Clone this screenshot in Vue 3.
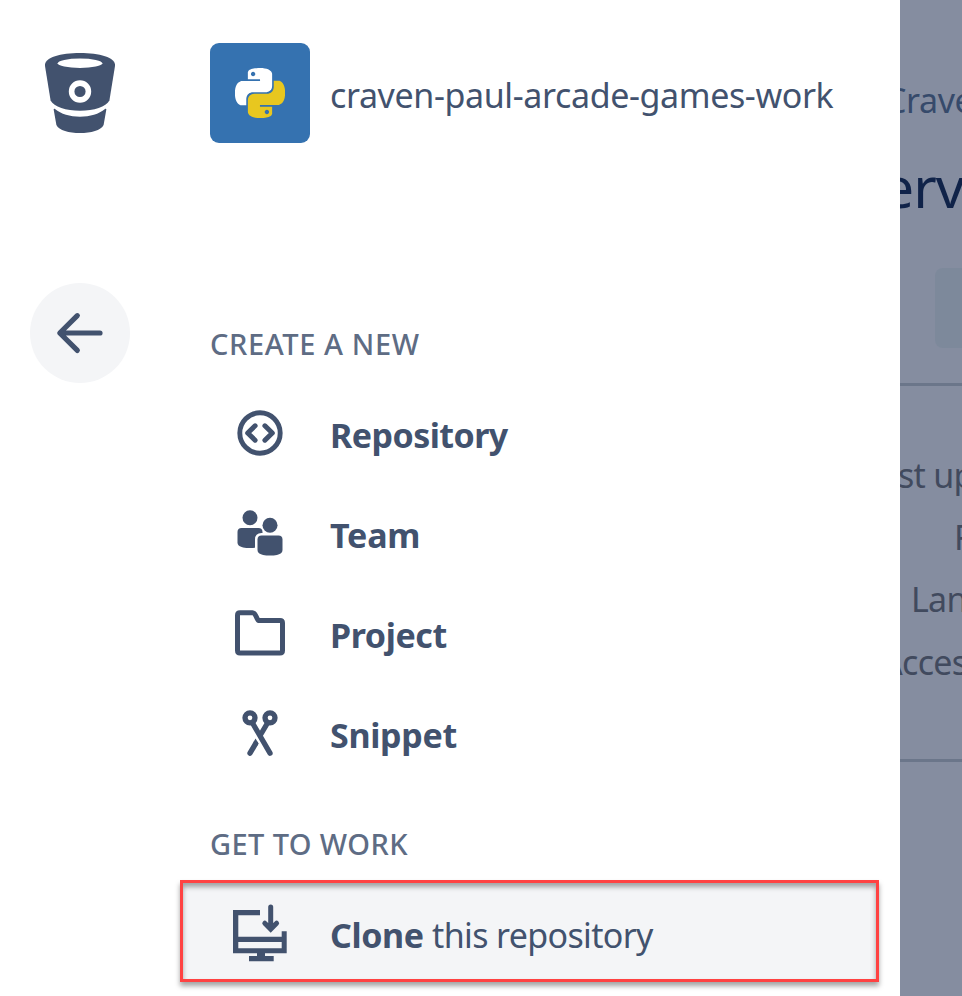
<script setup>
const createItems = [
  { id: 'repository', label: 'Repository' },
  { id: 'team', label: 'Team' },
  { id: 'project', label: 'Project' },
  { id: 'snippet', label: 'Snippet' },
]
const details = ['st up', 'F', 'Lan', 'Acces']
const snake =
  'M14.25.18l.9.2.73.26.59.3.45.32.34.34.25.34.16.33.1.3.04.26.02.2-.01.13V8.5l-.05.63-.13.55-.21.46-.26.38-.3.31-.33.25-.35.19-.35.14-.33.1-.3.07-.26.04-.21.02H8.77l-.69.05-.59.14-.5.22-.41.27-.33.32-.27.35-.2.36-.15.37-.1.35-.07.32-.04.27-.02.21v3.06H3.17l-.21-.03-.28-.07-.32-.12-.35-.18-.36-.26-.36-.36-.35-.46-.32-.59-.28-.73-.21-.88-.14-1.05-.05-1.23.06-1.22.16-1.04.24-.87.32-.71.36-.57.4-.44.42-.33.42-.24.4-.16.36-.1.32-.05.24-.01h.16l.06.01h8.16v-.83H6.18l-.01-2.75-.02-.37.05-.34.11-.31.17-.28.25-.26.31-.23.38-.2.44-.18.51-.15.58-.12.64-.1.71-.06.77-.04.84-.02 1.27.05zm-6.3 1.98l-.23.33-.08.41.08.41.23.34.33.22.41.09.41-.09.33-.22.23-.34.08-.41-.08-.41-.23-.33-.33-.22-.41-.09-.41.09z'
</script>

<template>
  <div class="page">
    <aside class="drawer">
      <nav class="rail">
        <svg class="bucket" viewBox="0 0 72 82">
          <path fill="currentColor" d="M1 14C0 5 17 1 36 1s36 4 35 13l-5.600 34.500C62 55 50 58.700 36 58.700S10 55 6.600 48.500z" />
          <ellipse cx="36" cy="11.300" rx="22.300" ry="4.700" fill="#fff" />
          <circle cx="36" cy="39.500" r="8.400" fill="none" stroke="#fff" stroke-width="5.600" />
          <path fill="currentColor" d="M11 57C17 62 26 64.700 36 64.700S55 62 61 57c1-.6 1.500-.2 1.300.8L59.600 73C57 78.500 47 81 36 81S15 78.500 12.400 73L9.700 57.800c-.2-1 .3-1.400 1.300-.8z" />
        </svg>
        <button class="back" aria-label="Back">
          <svg viewBox="0 0 100 100">
            <path d="M47.300 32.700 29.800 50l17.500 17.400M30 50h40" fill="none" stroke="currentColor" stroke-width="5.200" stroke-linecap="round" stroke-linejoin="round" />
          </svg>
        </button>
      </nav>

      <main class="content">
        <header class="repo">
          <div class="avatar">
            <svg viewBox="0 0 24 24">
              <path :d="snake" fill="#fff" />
              <path :d="snake" fill="#e8c71f" transform="rotate(180 12 12)" />
            </svg>
          </div>
          <span class="name">craven-paul-arcade-games-work</span>
        </header>

        <h2 class="heading create">CREATE A NEW</h2>
        <a v-for="item in createItems" :key="item.id" class="item">
          <svg class="icon" viewBox="0 0 60 60">
            <g v-if="item.id === 'repository'" fill="none" stroke="currentColor" stroke-linecap="round" stroke-linejoin="round">
              <circle cx="30" cy="30" r="20.200" stroke-width="4.900" />
              <path d="M25.100 22.800 17.700 30l7.400 7.200M34.900 22.800l7.400 7.200-7.400 7.200" stroke-width="5" />
            </g>
            <g v-else-if="item.id === 'team'" fill="currentColor">
              <circle cx="20" cy="14.800" r="7.500" />
              <path d="M11.500 25h17c2.500 0 4 1.500 4 4v12.500C30 44 25 45 20 45s-9.500-.8-11.500-2.800c-.7-.8-1-1.700-1-2.700V29c0-2.500 1.500-4 4-4z" />
              <path d="M31.500 32.500h17c2.500 0 4 1.500 4 4V47c0 1-.3 1.900-1 2.700-2 2-6.500 2.800-11.500 2.800s-9.500-.8-11.500-2.800c-.7-.8-1-1.700-1-2.700V36.500c0-2.500 1.500-4 4-4z" stroke="#fff" stroke-width="5" paint-order="stroke" />
              <circle cx="40" cy="22.300" r="7.500" />
            </g>
            <path v-else-if="item.id === 'project'" d="M10 9.800h12.500c3.500 0 4.500 7.700 6 7.700H50c1.700 0 2.500.8 2.500 2.500v27.500c0 1.700-.8 2.500-2.500 2.500H10c-1.700 0-2.500-.8-2.500-2.500V12.300c0-1.700.8-2.500 2.500-2.500z" fill="none" stroke="currentColor" stroke-width="5" />
            <g v-else fill="none" stroke="currentColor" stroke-width="5.300" stroke-linecap="round">
              <circle cx="20" cy="14.800" r="5" />
              <circle cx="40" cy="14.800" r="5" />
              <path d="M22.500 20 40 50.200M37.500 20 31 31" />
              <path d="M20 50.200 25.600 40.700" />
              <path d="M23.300 39.200 25.600 35.500 28.500 40.400 27 43z" fill="currentColor" stroke="none" />
            </g>
          </svg>
          <b class="label" :class="item.id">{{ item.label }}</b>
        </a>

        <h2 class="heading work">GET TO WORK</h2>
        <a class="item selected">
          <svg class="icon" viewBox="0 0 60 60">
            <path fill="currentColor" d="M3 7h27v5.300H8.300v21.400h43.400v-5.400h5v22H35V53h8.700v5.300H19V53h8v-2.700H3zM8.300 39v6.300h43.400V39z" fill-rule="evenodd" />
            <path d="M40.700 4v21M34.800 20.200l5.900 5.900 5.900-5.900" fill="none" stroke="currentColor" stroke-width="5" stroke-linecap="round" />
          </svg>
          <span class="label clone"><b>Clone</b> <span class="rest">this repository</span></span>
        </a>
      </main>
    </aside>

    <section class="behind">
      <div class="crumb">Crave</div>
      <div class="title">erv</div>
      <div class="button"></div>
      <div class="details">
        <div v-for="(d, i) in details" :key="d" class="detail" :class="'d' + i">{{ d }}</div>
      </div>
    </section>
  </div>
</template>

<style>
body {
  overflow: hidden;
}
</style>

<style scoped>
.page {
  display: flex;
  width: 962px;
  height: 996px;
  overflow: hidden;
  font-family: "Noto Sans", "Open Sans", sans-serif;
  font-size: 34px;
  color: #42526e;
  background: #fff;
}
.drawer {
  display: flex;
  flex: 0 0 900px;
}
.rail {
  display: flex;
  flex: 0 0 160px;
  flex-direction: column;
  align-items: center;
  padding-top: 52px;
  box-sizing: border-box;
}
.bucket {
  width: 72px;
  height: 82px;
}
.back {
  width: 100px;
  height: 100px;
  margin-top: 149px;
  padding: 0;
  border: 0;
  border-radius: 50%;
  color: inherit;
  background: #f4f5f7;
}
.back svg {
  display: block;
}
.content {
  flex: 1;
  padding: 43px 21px 0 20px;
}
.repo {
  display: flex;
  align-items: center;
  gap: 20px;
  height: 100px;
  padding-left: 30px;
}
.avatar {
  display: flex;
  align-items: center;
  justify-content: center;
  width: 100px;
  height: 100px;
  border-radius: 9px;
  background: #3572b0;
}
.avatar svg {
  width: 50px;
  height: 50px;
}
.name {
  padding-top: 4px;
  letter-spacing: -0.380px;
  white-space: nowrap;
}
.heading {
  margin: 0;
  padding-left: 30px;
  font-size: 29px;
  line-height: 40px;
  font-weight: 500;
  letter-spacing: 0.600px;
  color: #5e6c84;
  white-space: nowrap;
}
.create {
  margin-top: 181px;
  margin-bottom: 19px;
}
.work {
  margin-top: 41px;
  margin-bottom: 16px;
  letter-spacing: 0.400px;
}
.item {
  display: flex;
  align-items: center;
  height: 100px;
  padding-left: 50px;
}
.icon {
  width: 60px;
  height: 60px;
  margin-right: 40px;
}
.label {
  padding-top: 4px;
  letter-spacing: -0.400px;
  white-space: nowrap;
}
.repository {
  letter-spacing: -0.550px;
}
.team {
  letter-spacing: -0.200px;
}
.snippet {
  letter-spacing: -0.300px;
}
.rest {
  letter-spacing: -0.650px;
}
.selected {
  box-sizing: border-box;
  height: 102px;
  padding-top: 4px;
  padding-left: 47px;
  border: 3px solid #ff4242;
  background: #f4f5f7;
  box-shadow: 0 4px 5px rgba(0, 0, 0, 0.36), inset 0 4px 5px rgba(0, 0, 0, 0.34);
}
.behind {
  flex: 0 0 62px;
  overflow: hidden;
  background: #858da0;
  white-space: nowrap;
}
.crumb {
  height: 48px;
  margin: 76px 0 0 -15px;
  line-height: 48px;
  letter-spacing: -0.400px;
  color: #364a6b;
}
.title {
  height: 80px;
  margin: 22px 0 0 -18px;
  font-size: 57px;
  line-height: 80px;
  letter-spacing: -1px;
  color: #102349;
}
.button {
  height: 80px;
  margin: 42px 0 0 35px;
  border-radius: 8px 0 0 8px;
  background: #7d899b;
}
.details {
  height: 315.300px;
  margin-top: 35px;
  padding-top: 57.700px;
  border-top: 3px solid #6b768a;
  border-bottom: 3px solid #6b768a;
  color: #414a5e;
}
.detail {
  height: 62.400px;
  line-height: 62.400px;
  letter-spacing: -0.700px;
}
.d0 { margin-left: -2px; }
.d1 { margin-left: 54px; }
.d2 { margin-left: 11px; }
.d3 { margin-left: -19px; }
</style>
